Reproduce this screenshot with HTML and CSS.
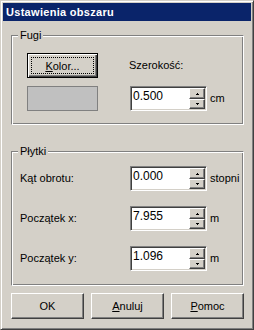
FILE: index.html
```html
<!DOCTYPE html>
<html lang="pl">
<head>
<meta charset="utf-8">
<title>Ustawienia obszaru</title>
<link rel="stylesheet" href="styles.css">
</head>
<body>
<div class="window">
  <div class="titlebar">Ustawienia obszaru</div>
  <div class="content">
    <div class="group fugi">
      <span class="legend">Fugi</span>
      <div class="fugi-grid">
        <button class="btn default"><span class="focus"><u>K</u>olor...</span></button>
        <span class="label">Szerokość:</span>
        <div class="swatch"></div>
        <div class="field">
          <div class="edit">
            <span class="val">0.500</span>
            <div class="spin">
              <span class="spin-btn up"><svg width="3" height="2" viewBox="0 0 3 2"><path d="M1 0h1v1h1v1H0V1h1z"/></svg></span>
              <span class="spin-btn down"><svg width="3" height="2" viewBox="0 0 3 2"><path d="M0 0h3v1H2v1H1V1H0z"/></svg></span>
            </div>
          </div>
          <span class="unit">cm</span>
        </div>
      </div>
    </div>

    <div class="group plytki">
      <span class="legend">Płytki</span>
      <div class="rows">
        <span class="label">Kąt obrotu:</span>
        <div class="field">
          <div class="edit">
            <span class="val">0.000</span>
            <div class="spin">
              <span class="spin-btn up"><svg width="3" height="2" viewBox="0 0 3 2"><path d="M1 0h1v1h1v1H0V1h1z"/></svg></span>
              <span class="spin-btn down"><svg width="3" height="2" viewBox="0 0 3 2"><path d="M0 0h3v1H2v1H1V1H0z"/></svg></span>
            </div>
          </div>
          <span class="unit">stopni</span>
        </div>

        <span class="label">Początek x:</span>
        <div class="field">
          <div class="edit">
            <span class="val">7.955</span>
            <div class="spin">
              <span class="spin-btn up"><svg width="3" height="2" viewBox="0 0 3 2"><path d="M1 0h1v1h1v1H0V1h1z"/></svg></span>
              <span class="spin-btn down"><svg width="3" height="2" viewBox="0 0 3 2"><path d="M0 0h3v1H2v1H1V1H0z"/></svg></span>
            </div>
          </div>
          <span class="unit">m</span>
        </div>

        <span class="label">Początek y:</span>
        <div class="field">
          <div class="edit">
            <span class="val">1.096</span>
            <div class="spin">
              <span class="spin-btn up"><svg width="3" height="2" viewBox="0 0 3 2"><path d="M1 0h1v1h1v1H0V1h1z"/></svg></span>
              <span class="spin-btn down"><svg width="3" height="2" viewBox="0 0 3 2"><path d="M0 0h3v1H2v1H1V1H0z"/></svg></span>
            </div>
          </div>
          <span class="unit">m</span>
        </div>
      </div>
    </div>

    <div class="buttons">
      <button class="btn">OK</button>
      <button class="btn"><u>A</u>nuluj</button>
      <button class="btn"><u>P</u>omoc</button>
    </div>
  </div>
</div>
</body>
</html>
```

FILE: styles.css
```css
* {
  box-sizing: border-box;
}

html,
body {
  margin: 0;
  padding: 0;
}

body {
  font: 11px "Liberation Sans", Arial, sans-serif;
  color: #000;
  background: #d4d0c8;
}

.window {
  width: 254px;
  height: 330px;
  background: #d4d0c8;
  border: 1px solid;
  border-color: #d4d0c8 #404040 #404040 #d4d0c8;
  box-shadow: inset 1px 1px #fff, inset -1px -1px #808080;
  padding: 2px;
  display: flex;
  flex-direction: column;
}

.titlebar {
  height: 18px;
  background: #0a246a;
  color: #fff;
  font-weight: bold;
  font-size: 11px;
  letter-spacing: 0.3px;
  line-height: 17px;
  padding: 1px 0 0 3px;
}

.content {
  padding: 14px 7px 0 8px;
  display: flex;
  flex-direction: column;
}

.group {
  position: relative;
  width: 233px;
  border: 1px solid;
  border-color: #808080 #fff #fff #808080;
  box-shadow: inset 1px 1px #fff, inset -1px -1px #808080;
}

.legend {
  position: absolute;
  top: -7px;
  left: 6px;
  padding: 0 2px;
  background: #d4d0c8;
  line-height: 13px;
}

.fugi {
  height: 90px;
  padding: 17px 0 0 15px;
}

.fugi-grid {
  display: grid;
  grid-template-columns: 71px auto;
  grid-template-rows: 25px 25px;
  column-gap: 32px;
  row-gap: 8px;
  align-items: center;
}

.fugi-grid > .label {
  margin-left: -1px;
}

.plytki {
  margin-top: 26px;
  height: 135px;
  padding: 14px 0 0 8px;
}

.rows {
  display: grid;
  grid-template-columns: 110px auto;
  grid-auto-rows: 25px;
  row-gap: 15px;
  align-items: center;
}

.label {
  line-height: 13px;
}

.field {
  display: flex;
  align-items: center;
  gap: 3px;
}

.edit {
  width: 77px;
  height: 25px;
  background: #fff;
  border: 1px solid;
  border-color: #808080 #fff #fff #808080;
  box-shadow: inset 1px 1px #404040, inset -1px -1px #d4d0c8;
  padding: 1px;
  display: flex;
}

.val {
  flex: 1;
  font-size: 12px;
  line-height: 14px;
  padding: 1px 0 0 1px;
}

.spin {
  width: 16px;
  display: flex;
  flex-direction: column;
}

.spin-btn {
  display: flex;
  align-items: center;
  justify-content: center;
  background: #d4d0c8;
  border: 1px solid;
  border-color: #fff #404040 #404040 #fff;
  box-shadow: inset -1px -1px #808080;
}

.spin-btn.up {
  height: 11px;
}

.spin-btn.down {
  height: 10px;
}

.spin-btn svg {
  display: block;
  fill: #000;
}

.unit {
  line-height: 13px;
}

.swatch {
  width: 71px;
  height: 25px;
  background: #c0c0c0;
  border: 1px solid #808080;
}

.btn {
  font: inherit;
  color: #000;
  background: #d4d0c8;
  border: 1px solid;
  border-color: #fff #404040 #404040 #fff;
  box-shadow: inset -1px -1px #808080;
  padding: 0;
  margin: 0;
  display: flex;
  align-items: center;
  justify-content: center;
}

.btn u {
  text-decoration: underline;
}

.btn.default {
  width: 71px;
  height: 25px;
  border-color: #000;
  box-shadow: inset 1px 1px #fff, inset -1px -1px #404040, inset -2px -2px #808080;
}

.focus {
  align-self: stretch;
  flex: 1;
  margin: 3px;
  border: 1px dotted #000;
  display: flex;
  align-items: center;
  justify-content: center;
}

.buttons {
  display: flex;
  gap: 7px;
  margin-top: 7px;
}

.buttons .btn {
  width: 73px;
  height: 26px;
}
```
